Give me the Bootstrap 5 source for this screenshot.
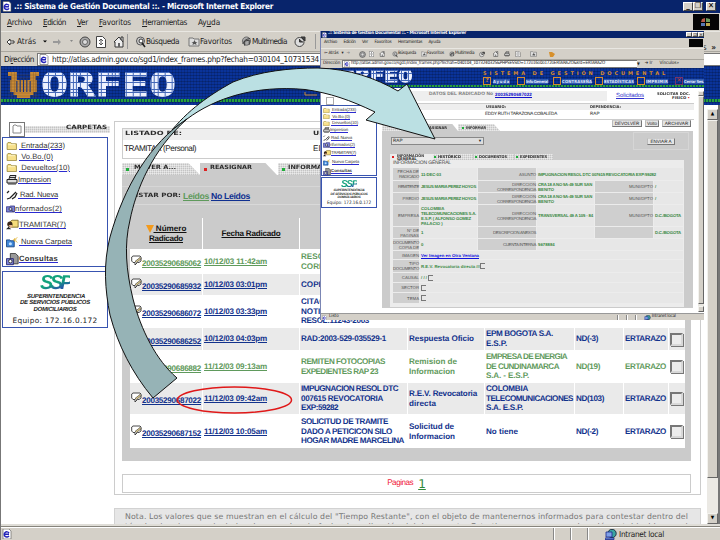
<!DOCTYPE html>
<html lang="es">
<head>
<meta charset="utf-8">
<title>Sistema de Gestión Documental</title>
<link rel="stylesheet" href="https://cdn.jsdelivr.net/npm/bootstrap@5.3.0/dist/css/bootstrap.min.css">
<style>
html,body{width:720px;height:540px;overflow:hidden}
body{font-family:"DejaVu Sans Condensed","DejaVu Sans",sans-serif;font-size:8.2px;line-height:1;color:#222;background:#fff;text-rendering:geometricPrecision}
#screen{width:720px;height:540px;border-left:1px solid #777}
span,a,b{white-space:nowrap}
a{color:#103090}
[data-w]{display:inline-block;flex:none}
svg{flex:none;display:block}
.chrome{background:#d4d0c8}
.g1{margin-left:1px}.g2{margin-left:2px}.g3{margin-left:3px}.g5{margin-left:5px}.g7{margin-left:7px}.g9{margin-left:9px}.g12{margin-left:12px}
.titlebar{height:13px;background:#08246b;color:#fff;font-weight:bold}
.winbtn{width:10px;height:9px;background:#d4d0c8;border:1px solid #fff;border-right-color:#444;border-bottom-color:#444;color:#000;font-size:8px;line-height:6px;text-align:center;flex:none}
.menus{height:18px;gap:11px;padding-left:6px}
.winlogo{width:26px;height:16px;background:#050505;margin-right:1px}
.tools{height:20px;border-top:1px solid #e9e7e2;padding-left:5px}
.addr{height:15px;border-top:1px solid #a9a69e;padding-left:3px}
.vline{width:1px;height:15px;background:#999;flex:none}
.field{height:13px;background:#fff;border:1px solid #777;border-right:0;flex:1;margin-left:3px;min-width:0}
.banner{height:39px;background:#0a3399;background-image:repeating-linear-gradient(#0003 0 1px,transparent 1px 3px),repeating-linear-gradient(90deg,#0002 0 1px,transparent 1px 3px)}
.dots{height:3px;background:repeating-linear-gradient(90deg,#28a03c 0 2px,#0b4c50 2px 3px)}
.orfeo{font:bold 33px/26px "DejaVu Sans Mono",monospace;color:transparent;transform:scaleX(1.36);transform-origin:left center;-webkit-background-clip:text;background-clip:text;-webkit-text-stroke:.8px transparent;background-image:repeating-linear-gradient(#4468b8 0 .5px,transparent .5px 3.4px),repeating-linear-gradient(90deg,#4468b8 0 .5px,transparent .5px 2.6px),linear-gradient(#eef2ff,#eef2ff)}
.sideb{width:113px;flex:none;padding:16px 0 0 1px}
.grain{background:repeating-linear-gradient(90deg,#fff6 0 1px,transparent 1px 2px),repeating-linear-gradient(#fff6 0 1px,transparent 1px 2px),#c4c4c4}
.wide{font-family:"DejaVu Sans",sans-serif;font-weight:bold;text-transform:uppercase;font-size:5.8px;color:#2c2c2c}
.sidebox{width:106px;border:1px solid #3854b0}
.tree{height:130px;padding:2px 0 0 3px;font:7.6px/1 "Liberation Sans",sans-serif}
.tree>div{display:flex;align-items:center}
.tree a{color:#333;text-decoration-color:#2b2bd0}
.h11{height:11px}.h14{height:14.5px}.h17{height:17px}
.ssp{font:italic bold 20px/18px "Liberation Sans",sans-serif;color:transparent;-webkit-background-clip:text;background-clip:text;background-image:linear-gradient(160deg,#12a27c 0 50%,#2356a8 75%,#1aa070)}
.agency{font:italic bold 6px/6.4px "Liberation Sans",sans-serif;color:#222}
.frame{width:587px;height:374px;border:1px solid #ccc;margin-top:16px;padding:6px 0 0 7px}
.whobox{width:569px;height:31px;border:1px solid #ccc}
.tabrow{height:12px;margin-top:4px}
.tabx{height:12px;flex:none;clip-path:polygon(0 0,85% 0,100% 100%,0 100%);padding-left:4px}
.sq{width:3px;height:3px;background:#1fae3a;flex:none}.sq.red{background:#d22}
.panel{width:569px;height:286px;background:#cbcbcb}
.band{height:19px;margin-top:11px;border-top:1px solid #d6d6d6;border-bottom:1px solid #d9d9d9;font:bold 8.7px/10px "Liberation Sans",sans-serif}
.docs{display:grid;grid-template-columns:72px 96px 107px 76px 89px 48px 44px 16px;grid-template-rows:31px 23px 21px 31px 22px 31px 31px 33px;gap:1px;width:555px;height:230px;margin:13px 0 0 8px;background:#fff;font:bold 8.1px/9.8px "Liberation Sans",sans-serif;color:#12328c}
.docs>div{display:flex;flex-direction:column;justify-content:center;padding-left:1px;min-width:0}
.docs>.hd{background:#cbcbcb;color:#111;align-items:center;padding:0}
.docs>.e{background:#eaeaea}
.docs>.v{color:#5f9a5c}
.docs a{color:inherit}
.docs>.num{flex-direction:row;justify-content:flex-start;align-items:center;padding:0 0 0 1px}
.num a{margin-top:5px}
.num svg{margin-top:-3px}
.chk{width:13px;height:13px;background:#ececec;border:2px solid #777;border-right-color:#d8d8d8;border-bottom-color:#d8d8d8;box-shadow:1px 1px #777}
.pages{width:569px;height:19px;border:1px solid #ccc;margin-top:13px;font-family:"Liberation Sans",sans-serif;color:#f0203c}
.pages a{font:12px/12px "DejaVu Sans",sans-serif;color:#2f8a3a}
.note{width:587px;height:17px;margin-top:13px;background:#e6e6e6;border:1px solid #d2d2d2;border-bottom:0;overflow:hidden;font:7.8px/10px "DejaVu Sans",sans-serif;color:#777;padding:3px 0 0 10px}
.sbar{width:11px;height:415px;background:#ebe9e4;margin-top:4px;flex:none}
.sbtn{height:11px;background:#d4d0c8;border:1px solid #f3f2ee;border-right-color:#666;border-bottom-color:#666;font-size:5px;color:#000}
.status{height:13px;border-top:1px solid #fff}
.pane{height:12px;width:17px;border-left:1px solid #888;box-shadow:inset 1px 0 #fff}
/* floating browser window */
#pop{position:absolute;left:319px;top:31px;width:384px;height:289px;background:#fff;border-left:1px solid #7b86b4;font-size:4.6px;overflow:hidden}
#pop .titlebar{height:7px}
#pop .menus{height:10px;gap:6.5px;padding-left:3px}
#pop .tools{height:11px;padding-left:3px}
#pop .addr{height:9px;padding-left:2px}
#pop .field{height:8px;margin-left:2px;flex:0 0 341px;border-width:.5px}
#pop .winbtn{width:6px;height:5px;font-size:4px;line-height:3px;border-width:.5px}
#pop .banner{height:20px;overflow:hidden}
#pop .orfeo{font-size:17.5px;line-height:14px}
#pop .tree{height:71px;font-size:4.4px;padding:1px 0 0 1px}
#pop .sidebox{width:56px}
#pop .wide{font-size:3.8px}
#pop .agency{font-size:3.3px;line-height:3.5px}
.or{color:#d58a2c}
.bi{width:8px;height:8px;border:1px solid #d58a2c;flex:none;font:bold 6px/6px "DejaVu Sans",sans-serif}
.bt{color:#dfe6fa;background:#2f58ad;font-weight:bold;font-size:4.2px;line-height:5px}
.pbtn{border:1px solid #777;border-top-color:#ccc;border-left-color:#bbb;background:#e4e4e4;height:7px;font:4.6px/5px "Liberation Sans",sans-serif;text-align:center;flex:none}
.pmain{width:316px;padding-left:4px;flex:none;font-family:"Liberation Sans",sans-serif}
.ppanel{width:311px;height:177px;background:#cbcbcb}
.info{width:294px;height:147px;background:#ececec;margin-left:8px;padding:1px 0 0 3px}
.grid6{display:grid;grid-template-columns:26px 57px 58px 57px 58px 29px;grid-template-rows:12px 11px 11px 21px 11px 11px 8px 12px 9px 9px 10px;gap:1px;font:4.3px/5px "Liberation Sans",sans-serif}
.grid6>div{display:flex;flex-direction:column;justify-content:center;background:#e7e7e7;color:#3c8a46;font-weight:bold;min-width:0;padding-left:1px}
.grid6>.l{background:#cfcfcf;color:#555;align-items:flex-end;font-weight:normal;padding:0}
.grid6>.s5{grid-column:span 5}.grid6>.s3{grid-column:span 3}
.grid6>.rw{flex-direction:row;justify-content:flex-start;align-items:center}
.mini{width:5px;height:6px;border:1px solid #777;border-right:0;flex:none}
#arrow{position:absolute;left:0;top:0;pointer-events:none}
</style>
</head>
<body>
<svg width="0" height="0" class="position-absolute"><defs>
<symbol id="ie" viewBox="0 0 10 10"><path d="M1 0h6l2 2v8H1z" fill="#fff" stroke="#555" stroke-width=".6"/><path d="M7 6.800A2.600 2.600 0 1 1 7 4M2 5.200h5" fill="none" stroke="#2424b8" stroke-width="1.400"/></symbol>
<symbol id="fold" viewBox="0 0 12 9"><path d="M.5 8.500V2l1-1.500h3L5.500 2h5.500v6.500z" fill="#f7e08a" stroke="#8b7a28" stroke-width=".8"/><path d="M1.500 3h8" stroke="#fff8cc"/></symbol>
<symbol id="prt" viewBox="0 0 12 10"><path d="M3 4l1-3.500h6L9 4M1 4.500h10v3.500H1z" fill="#ddd" stroke="#222"/><path d="M2 9h8M3 2.500h6" stroke="#333"/></symbol>
<symbol id="pen" viewBox="0 0 12 10"><path d="M1 3l2-2M1 9l3-1 6-6M6 9l3-2 2-4" fill="none" stroke="#222" stroke-width="1.300"/></symbol>
<symbol id="inf" viewBox="0 0 12 10"><path d="M.5 2h4l1-1h6v8H.5z" fill="#7c82d8" stroke="#29297a"/><circle cx="6" cy="5" r="2" fill="#d8dcff" stroke="#222"/><path d="M7 6l3 3" stroke="#222"/></symbol>
<symbol id="man" viewBox="0 0 15 12"><path d="M5 2l2-1.500h7v8H5z" fill="#f5dc7a" stroke="#786420"/><circle cx="4.500" cy="5" r="3" fill="#3a2618"/><path d="M3 6h4v3H5z" fill="#e8b48c"/><path d="M0 11l3-3 3 3z" fill="#222"/></symbol>
<symbol id="new" viewBox="0 0 15 12"><path d="M.5 3h4l1 1h4v7h-9z" fill="#3f86d8" stroke="#14407c"/><circle cx="5" cy="7.500" r="1.800" fill="#bfe0ff"/><path d="M10 1v4M8 3h4M13 0l-2 2M13 6l-2-2" stroke="#e0b030"/></symbol>
<symbol id="con" viewBox="0 0 15 14"><path d="M5 0h6l3 3v9H5z" fill="#999" stroke="#333"/><path d="M.5 6h8v7h-8z" fill="#7c82d8" stroke="#222266"/><circle cx="5" cy="9" r="2" fill="#fff" stroke="#222"/></symbol>
<symbol id="stop" viewBox="0 0 12 12"><circle cx="6" cy="6" r="5" fill="#aaa" stroke="#444"/><circle cx="6" cy="6" r="2.500" fill="#ddd" stroke="#666"/></symbol>
<symbol id="refr" viewBox="0 0 10 12"><path d="M.5.500h6l3 3v8h-9z" fill="#fff" stroke="#444"/><path d="M3 5l2-2 2 2M5 3v3M3 7l2 2 2-2M5 9V6" fill="none" stroke="#555"/></symbol>
<symbol id="home" viewBox="0 0 11 12"><path d="M1 6l5-5 4 5v5H2V6zM8 4V1h2v5" fill="#eee" stroke="#333"/><path d="M5 7h2v4H5z" fill="#666"/></symbol>
<symbol id="srch" viewBox="0 0 11 12"><circle cx="5.500" cy="5" r="4" fill="#ccc" stroke="#555"/><circle cx="6" cy="5" r="2" fill="#fff" stroke="#333"/><path d="M7 7l3 4" stroke="#222" stroke-width="1.500"/></symbol>
<symbol id="favo" viewBox="0 0 11 10"><path d="M.5 1h4l1 1h5v7H.5z" fill="#ddd" stroke="#777"/><path d="M6 3l1 2h2L7.500 6l.5 2-2-1-2 1 .5-2L3 5h2z" fill="#555"/></symbol>
<symbol id="mm" viewBox="0 0 12 12"><circle cx="6" cy="5" r="4.500" fill="#aaa" stroke="#666"/><path d="M2 8c2-5 5-5 8-6M4 10V5l5-1v5" fill="none" stroke="#333"/></symbol>
<symbol id="hist" viewBox="0 0 12 12"><circle cx="5.500" cy="6" r="4.500" fill="#ddd" stroke="#444"/><path d="M5.500 3v3H9M7 1h4v4z" fill="#444" stroke="#333"/></symbol>
<symbol id="note" viewBox="0 0 11 11"><path d="M2 1h7l1 1v4L8 7.500H6.500L4 10V7.500H2L.7 6V2z" fill="#fff" stroke="#333" stroke-width=".9"/><path d="M4 6.500L9 2.500l1.200 1.300L5.500 7.500z" fill="#dcc888" stroke="#333" stroke-width=".6"/></symbol>
<symbol id="net" viewBox="0 0 12 11"><circle cx="7" cy="4.500" r="4.200" fill="#39a3a0" stroke="#234"/><path d="M1 3h6v5H1zM0 9h9v1.500H0z" fill="#7fa0e8" stroke="#18288c" stroke-width=".8"/></symbol>
<symbol id="lyre" viewBox="0 0 28 26"><path d="M0 0h8v4H0zM20 0h8v4h-8zM3 4h5v4H3zM20 4h5v4h-5zM2 8h24v12H2zM5 20h18v3H5zM8 23h12v3H8z" fill="#c98a35"/><path d="M8 9v11M11 6v14M14 6v14M17 6v14M20 9v11" stroke="#123284"/><path d="M0 3h28M0 6h28M0 9h28M0 12h28M0 15h28M0 18h28M0 21h28M0 24h28M3 0v26M6 0v26M23 0v26M25 0v26" stroke="#6b4c2a" stroke-width=".5" opacity=".6"/></symbol>
</defs></svg>

<div id="screen" class="position-relative d-flex flex-column overflow-hidden">
  <div class="titlebar d-flex align-items-center">
    <svg class="g1" width="10" height="11"><use href="#ie"/></svg><span class="g2" data-w="259">.:: Sistema de Gestión Documental ::. - Microsoft Internet Explorer</span>
    <div class="ms-auto d-flex"><div class="winbtn">_</div><div class="winbtn">❐</div><div class="winbtn g3 me-1">✕</div></div>
  </div>
  <div class="chrome menus d-flex align-items-center">
    <span data-w="25"><u>A</u>rchivo</span><span data-w="23"><u>E</u>dición</span><span data-w="11"><u>V</u>er</span><span data-w="32"><u>F</u>avoritos</span><span data-w="45"><u>H</u>erramientas</span><span data-w="22">Ay<u>u</u>da</span>
    <div class="winlogo ms-auto d-flex align-items-center justify-content-center"><svg width="12" height="10"><path d="M2 2l3-1v4H1z" fill="#b65a48"/><path d="M6 1l4 1v3H6z" fill="#6d9b5c"/><path d="M1 6h4v3H1z" fill="#5878b4"/><path d="M6 6h4v3H6z" fill="#bca64c"/></svg></div>
  </div>
  <div class="chrome tools d-flex align-items-center">
    <svg width="9" height="8"><path d="M4 1L1 4l3 3V5h4V3H4z" fill="#fff" stroke="#222" stroke-width=".9"/></svg><span class="g2" data-w="19">Atrás</span>
    <svg class="g7" width="5" height="4"><path d="M0 .5h4l-2 2z"/></svg>
    <svg class="g5" width="10" height="8"><path d="M5 1l3 3-3 3V5H0V3h5z" fill="#999"/></svg>
    <svg class="g7" width="4" height="3"><path d="M0 0h3l-1.500 2z" fill="#888"/></svg>
    <svg class="g5" width="12" height="12"><use href="#stop"/></svg>
    <svg class="g5" width="10" height="12"><use href="#refr"/></svg>
    <svg class="g7" width="11" height="12"><use href="#home"/></svg>
    <div class="vline g3"></div>
    <svg class="g7" width="11" height="12"><use href="#srch"/></svg><span data-w="33">Búsqueda</span>
    <svg class="g9" width="12" height="10"><use href="#favo"/></svg><span data-w="32">Favoritos</span>
    <svg class="g9" width="11" height="12"><use href="#mm"/></svg><span data-w="35">Multimedia</span>
    <svg class="g7" width="12" height="12"><use href="#hist"/></svg><div class="vline g9"></div>
    <span class="ms-auto me-1 align-self-end">s &nbsp;<b>»</b></span>
  </div>
  <div class="chrome addr d-flex align-items-center">
    <span data-w="30">Di<u>r</u>ección</span>
    <div class="field d-flex align-items-center"><svg class="g1" width="10" height="11"><use href="#ie"/></svg><span class="g3" data-w="267">http://atlas.admin.gov.co/sgd1/index_frames.php?fechah=030104_10731534</span></div>
  </div>
  <div class="banner d-flex flex-column">
    <div class="d-flex align-items-center pt-1" style="height:33px"><svg class="g7" width="31" height="26" viewBox="0 0 28 26" preserveAspectRatio="none"><use href="#lyre" width="28" height="26"/></svg><span class="orfeo g2">ORFEO</span></div>
    <div class="dots"></div>
  </div>

  <div class="d-flex overflow-hidden" style="height:419px">
    <div class="sideb">
      <div class="d-flex align-items-center g7" style="height:16px">
        <svg width="16" height="15"><rect x=".5" y=".5" width="15" height="14" fill="#fff" stroke="#777"/><path d="M4 11V4l1-1h2l1 1h4v7z" fill="#fff" stroke="#888"/></svg>
        <div class="grain flex-grow-1 d-flex justify-content-end align-items-center me-1" style="height:7px;padding-right:3px"><span class="wide" data-w="41">Carpetas</span></div>
      </div>
      <div class="sidebox tree">
        <div class="h11"><svg width="12" height="8"><use href="#fold"/></svg><a href="#" class="g1" data-w="46">&nbsp;Entrada(233)</a></div>
        <div class="h11"><svg width="12" height="8"><use href="#fold"/></svg><a href="#" class="g1" data-w="34">&nbsp;Vo.Bo.(0)</a></div>
        <div class="h11"><svg width="12" height="8"><use href="#fold"/></svg><a href="#" class="g1" data-w="51">&nbsp;Devueltos(10)</a></div>
        <div class="h14"><svg width="12" height="10"><use href="#prt"/></svg><a href="#" data-w="33">Impresion</a></div>
        <div class="h14"><svg width="12" height="10"><use href="#pen"/></svg><a href="#" data-w="40">&nbsp;Rad. Nueva</a></div>
        <div class="h14"><svg width="9" height="10"><use href="#inf"/></svg><a href="#" data-w="47">nformados(2)</a></div>
        <div class="h17"><svg width="13" height="12"><use href="#man"/></svg><a href="#" data-w="47">TRAMITAR(7)</a></div>
        <div class="h17"><svg width="13" height="11"><use href="#new"/></svg><a href="#" data-w="53">&nbsp;Nueva Carpeta</a></div>
        <div class="h17"><svg width="13" height="13"><use href="#con"/></svg><a href="#" data-w="39"><b>Consultas</b></a></div>
      </div>
      <div class="sidebox d-flex flex-column align-items-center" style="height:57px;margin-top:4px;padding-top:2px">
        <span class="ssp" data-w="30">SSP</span>
        <span class="agency g2" style="margin-top:2px" data-w="58">SUPERINTENDENCIA</span><span class="agency" data-w="70">DE SERVICIOS PÚBLICOS</span><span class="agency" data-w="43">DOMICILIARIOS</span>
        <span style="font:7.4px/10px 'DejaVu Sans';margin-top:3px" data-w="85">Equipo: 172.16.0.172</span>
      </div>
    </div>

    <div style="width:593px" class="flex-shrink-0">
      <div class="frame">
        <div class="whobox">
          <div class="d-flex align-items-center" style="height:11px;background:#eee"><span class="wide g2" style="width:188px"><span data-w="57">Listado de:</span></span><span class="wide" data-w="42">Usuario:</span></div>
          <div class="d-flex align-items-center" style="height:18px;font-family:'Liberation Sans'"><span class="g1" style="width:189px"><span data-w="72">TRAMITAR (Personal)</span></span><span>EDDY</span></div>
        </div>
        <div class="tabrow d-flex">
          <div class="tabx grain d-flex align-items-center" style="width:78px"><i class="sq"></i><b class="wide g5" data-w="42">Mover a...</b></div>
          <div class="tabx d-flex align-items-center" style="width:77px;background:#cbcbcb"><i class="sq red"></i><b class="wide g3" data-w="42">Reasignar</b></div>
          <div class="tabx grain d-flex align-items-center g1" style="width:80px"><i class="sq"></i><b class="wide g3" data-w="39">Informar</b></div>
        </div>
        <div class="panel overflow-hidden">
          <div class="band d-flex align-items-center"><span class="wide g9" data-w="50">Listar por:</span><a class="g2" href="#" style="color:#5f9a5c" data-w="26">Leídos</a><a class="g2" href="#" data-w="39">No Leídos</a></div>
          <div class="docs">
            <div class="hd"><span class="d-flex align-items-center"><svg width="8" height="8"><path d="M0 0h8L4 8z" fill="#f39a1c"/></svg><u data-w="33">&nbsp;Número</u></span><u data-w="34">Radicado</u></div><div class="hd"><u data-w="59">Fecha Radicado</u></div><div class="hd"></div><div class="hd"></div><div class="hd"></div><div class="hd"></div><div class="hd"></div><div class="hd"></div>

            <div class="num v"><svg width="11" height="11"><use href="#note"/></svg><a href="#" data-w="59">20035290685062</a></div><div class="v"><a href="#" data-w="63">10/12/03 11:42am</a></div><div class="v"><span>RESOL</span><span>CORRE</span></div><div></div><div></div><div></div><div></div><div></div>

            <div class="num e"><svg width="11" height="11"><use href="#note"/></svg><a href="#" data-w="59">20035290685932</a></div><div class="e"><a href="#" data-w="63">10/12/03 03:01pm</a></div><div class="e">COPIA</div><div class="e"></div><div class="e"></div><div class="e"></div><div class="e"></div><div class="e"></div>

            <div class="num"><svg width="11" height="11"><use href="#note"/></svg><a href="#" data-w="59">20035290686072</a></div><div><a href="#" data-w="63">10/12/03 03:33pm</a></div><div><span>CITAC</span><span>NOTIF</span><span data-w="68">RESOL:11243-2003</span></div><div></div><div></div><div></div><div></div><div></div>

            <div class="num e"><svg width="11" height="11"><use href="#note"/></svg><a href="#" data-w="59">20035290686252</a></div><div class="e"><a href="#" data-w="63">10/12/03 04:03pm</a></div><div class="e"><span data-w="85">RAD:2003-529-035529-1</span></div><div class="e"><span data-w="65">Respuesta Oficio</span></div><div class="e"><span data-w="67">EPM BOGOTA S.A.</span><span data-w="21">E.S.P.</span></div><div class="e"><span data-w="22">ND(-3)</span></div><div class="e"><span data-w="41">ERTARAZO</span></div><div class="e"><i class="chk"></i></div>

            <div class="num v"><svg width="11" height="11"><use href="#note"/></svg><a href="#" data-w="59">20035290686882</a></div><div class="v"><a href="#" data-w="63">11/12/03 09:13am</a></div><div class="v"><span data-w="84">REMITEN FOTOCOPIAS</span><span data-w="77">EXPEDIENTES RAP 23</span></div><div class="v"><span data-w="48">Remision de</span><span data-w="46">Informacion</span></div><div class="v"><span data-w="81">EMPRESA DE ENERGIA</span><span data-w="73">DE CUNDINAMARCA</span><span data-w="43">S.A. - E.S.P.</span></div><div class="v"><span data-w="24">ND(19)</span></div><div class="v"><span data-w="41">ERTARAZO</span></div><div><i class="chk"></i></div>

            <div class="num e"><svg width="11" height="11"><use href="#note"/></svg><a href="#" data-w="59">20035290687022</a></div><div class="e"><a href="#" data-w="63">11/12/03 09:42am</a></div><div class="e"><span data-w="97">IMPUGNACION RESOL DTC</span><span data-w="82">007615 REVOCATORIA</span><span data-w="37">EXP:59282</span></div><div class="e"><span data-w="68">R.E.V. Revocatoria</span><span data-w="27">directa</span></div><div class="e"><span data-w="42">COLOMBIA</span><span data-w="87">TELECOMUNICACIONES</span><span data-w="37">S.A. E.S.P.</span></div><div class="e"><span data-w="28">ND(103)</span></div><div class="e"><span data-w="41">ERTARAZO</span></div><div class="e"><i class="chk"></i></div>

            <div class="num"><svg width="11" height="11"><use href="#note"/></svg><a href="#" data-w="59">20035290687152</a></div><div><a href="#" data-w="63">11/12/03 10:05am</a></div><div><span data-w="87">SOLICITUD DE TRAMITE</span><span data-w="91">DADO A PETICICON SILO</span><span data-w="103">HOGAR MADRE MARCELINA</span></div><div><span data-w="45">Solicitud de</span><span data-w="46">Informacion</span></div><div><span data-w="32">No tiene</span></div><div><span data-w="22">ND(-2)</span></div><div><span data-w="41">ERTARAZO</span></div><div><i class="chk"></i></div>
          </div>
        </div>
        <div class="pages d-flex align-items-center justify-content-center"><span data-w="26">Paginas</span><a class="g5" href="#">1</a></div>
      </div>
      <div class="note"><span data-w="563">Nota. Los valores que se muestran en el cálculo del "Tiempo Restante", con el objeto de mantenernos informados para contestar dentro del</span><br><span data-w="563">término legal, son calculados de acuerdo a la fecha de radicación del documento. Este tiempo es una aproximación establecida por el</span></div>
    </div>
    <div class="sbar d-flex flex-column">
      <div class="sbtn d-flex align-items-center justify-content-center">▲</div><div class="sbtn" style="height:358px"></div>
      <div class="sbtn mt-auto d-flex align-items-center justify-content-center">▼</div>
    </div>
    <div style="width:2px;background:#777"></div>
  </div>
  <div style="height:3px;background:#dfddd7;border-bottom:1px solid #86847c"></div>
  <div class="chrome status d-flex align-items-center">
    <svg class="g1" width="10" height="10"><use href="#ie"/></svg>
    <div class="d-flex align-items-center" style="margin-left:541px"><div class="pane"></div><div class="pane"></div><div class="pane"></div><svg class="g1" width="12" height="11"><use href="#net"/></svg><span class="g2" data-w="45">Intranet local</span></div>
  </div>

  <div id="pop">
    <div class="titlebar d-flex align-items-center"><svg class="g1" width="5" height="6"><use href="#ie"/></svg><span class="g1" data-w="138">.:: Sistema de Gestión Documental ::. - Microsoft Internet Explorer</span><div class="ms-auto d-flex"><div class="winbtn">_</div><div class="winbtn">❐</div><div class="winbtn">✕</div></div></div>
    <div class="chrome menus d-flex align-items-center"><span data-w="13">Archivo</span><span data-w="12">Edición</span><span data-w="6">Ver</span><span data-w="17">Favoritos</span><span data-w="24">Herramientas</span><span data-w="12">Ayuda</span><div class="winlogo ms-auto" style="width:14px;height:8px"></div></div>
    <div class="chrome tools d-flex align-items-center"><span>⇦</span><span class="g1" data-w="10">Atrás</span><span class="g3">▾</span><span class="g3" style="color:#888">➔</span>
      <svg class="g9" width="7" height="7"><use href="#stop"/></svg><svg class="g3" width="5" height="6"><use href="#refr"/></svg><svg class="g5" width="6" height="6"><use href="#home"/></svg>
      <svg class="g7" width="6" height="7"><use href="#srch"/></svg><span data-w="18">Búsqueda</span><svg class="g5" width="6" height="6"><use href="#favo"/></svg><span data-w="17">Favoritos</span><svg class="g5" width="6" height="7"><use href="#mm"/></svg><span data-w="19">Multimedia</span><svg class="g5" width="6" height="7"><use href="#hist"/></svg>
      <svg class="g7" width="7" height="6"><use href="#home"/></svg><svg class="g5" width="6" height="6"><use href="#prt"/></svg><svg class="g5" width="6" height="6"><use href="#refr"/></svg><svg class="g9" width="7" height="6"><use href="#favo"/></svg><svg class="g12" width="7" height="6"><path d="M0 1h3l3 2-2 3H1z" fill="#d7902c"/></svg></div>
    <div class="chrome addr d-flex align-items-center"><span data-w="17">Dirección</span>
      <div class="field d-flex align-items-center"><svg class="g1" width="6" height="6"><use href="#ie"/></svg><span class="g1" data-w="254">http://atlas.admin.gov.co/sgd1/index_frames.php?fechah=040104_1073240325&amp;PHPSESSID=172o16o0o172oERTARAZO&amp;krd=ERTARAZO</span>
        <div class="chrome d-flex align-items-center ms-auto" style="width:46px;height:8px;padding-left:0"><span style="font-size:4px">▼</span><span class="g5">➔ Ir</span><span class="g7" data-w="17">Vínculos</span><span>»</span></div></div></div>
    <div class="banner d-flex flex-column">
      <div class="d-flex" style="height:17px;padding-top:2px">
        <svg class="g5" width="15" height="14" viewBox="0 0 28 26"><use href="#lyre" width="28" height="26"/></svg><div style="width:142px"><span class="orfeo" style="display:inline-block">ORFEO</span></div>
        <div style="padding-top:1px"><span class="or d-block" style="font:bold 5px/6px 'DejaVu Sans'"><span data-w="185">SISTEMA DE GESTIÓN DOCUMENTAL</span></span>
          <div class="d-flex align-items-center"><i class="bi or text-center">?</i><span class="bt g2" data-w="17">Ayuda</span><i class="bi g7"></i><span class="bt g1" data-w="22">Info General</span><i class="bi g5"></i><span class="bt g1" data-w="30">CONTRASEÑA</span><i class="bi g3"></i><span class="bt g1" data-w="30">ESTADÍSTICAS</span><i class="bi g3"></i><span class="bt g1" data-w="22">IMPRIMIR</span><i class="bi g7 text-center" style="border-color:#736;color:#b44">✕</i><span class="bt g1" data-w="20">Cerrar Ses.</span></div>
        </div>
      </div>
      <div class="dots" style="height:2px"></div>
    </div>
    <div class="d-flex" style="height:225px">
      <div style="width:57px;padding-top:9px" class="flex-shrink-0">
        <svg class="g5 d-block" width="8" height="8"><rect x=".5" y=".5" width="7" height="7" fill="#fff" stroke="#aaa"/></svg>
        <div class="sidebox tree">
          <div style="height:6.500px"><svg width="7" height="5"><use href="#fold"/></svg><a href="#" class="g1" data-w="25">&nbsp;Entrada(233)</a></div>
          <div style="height:6.500px"><svg width="7" height="5"><use href="#fold"/></svg><a href="#" class="g1" data-w="19">&nbsp;Vo.Bo.(0)</a></div>
          <div style="height:6.500px"><svg width="7" height="5"><use href="#fold"/></svg><a href="#" class="g1" data-w="27">&nbsp;Devueltos(10)</a></div>
          <div style="height:7.500px"><svg width="7" height="6"><use href="#prt"/></svg><a href="#" data-w="18">Impresion</a></div>
          <div style="height:7.500px"><svg width="7" height="6"><use href="#pen"/></svg><a href="#" class="g1" data-w="21">Rad. Nueva</a></div>
          <div style="height:7.500px"><svg width="7" height="6"><use href="#inf"/></svg><a href="#" data-w="25">nformados(2)</a></div>
          <div style="height:9px"><svg width="8" height="7"><use href="#man"/></svg><a href="#" data-w="25">TRAMITAR(7)</a></div>
          <div style="height:9px"><svg width="8" height="7"><use href="#new"/></svg><a href="#" class="g1" data-w="27">Nueva Carpeta</a></div>
          <div style="height:9px"><svg width="8" height="8"><use href="#con"/></svg><a href="#" data-w="21"><b>Consultas</b></a></div>
        </div>
        <div class="sidebox d-flex flex-column align-items-center" style="height:31px;margin-top:1px;padding-top:2px"><span class="ssp" style="font-size:10px;line-height:9px" data-w="16">SSP</span><span class="agency" data-w="31">SUPERINTENDENCIA</span><span class="agency" data-w="37">DE SERVICIOS PÚBLICOS</span><span class="agency" data-w="23">DOMICILIARIOS</span><span style="margin-top:2px" data-w="44">Equipo: 172.16.0.172</span></div>
      </div>
      <div class="pmain">
        <div class="d-flex align-items-center" style="height:15px"><div class="d-flex align-items-center" style="width:225px;height:10px;background:#eee;padding-left:47px"><b style="font-size:4.800px;color:#777" data-w="64">DATOS DEL RADICADO No</b><a href="#" style="color:#11c;font-weight:bold" class="g2" data-w="37">20035290687022</a></div><a href="#" class="g9" style="font-size:6px;color:#33c" data-w="28">Solicitados</a><b class="wide text-end ms-auto me-1" style="line-height:4px"><span data-w="33">Solicitar Doc.</span><br>Fisico <span style="color:#d22">•</span></b></div>
        <div class="d-flex align-items-center" style="height:7px;background:#eee;border-top:1px solid #ccc"><b class="wide" style="margin-left:104px" data-w="20">Usuario:</b><b class="wide" style="margin-left:84px" data-w="31">Dependencia:</b></div>
        <div class="d-flex align-items-center" style="height:10px;border-bottom:1px solid #ccc"><span style="margin-left:103px" data-w="72">EDDY RUTH TARAZONA COBALEDA</span><span style="margin-left:33px">RAP</span></div>
        <div class="d-flex justify-content-end" style="height:7px;margin-right:3px;gap:3px"><div class="pbtn" style="width:30px">DEVOLVER</div><div class="pbtn" style="width:14px">Volto</div><div class="pbtn" style="width:29px">ARCHIVAR</div></div>
        <div class="d-flex" style="height:7px;margin-top:-3px"><div class="tabx grain" style="width:38px;height:7px"></div><div class="tabx d-flex align-items-center" style="width:38px;height:7px;background:#cbcbcb"><b class="wide" data-w="23">Reasignar</b></div><div class="tabx grain d-flex align-items-center" style="width:42px;height:7px"><i class="sq" style="width:2px;height:2px"></i><b class="wide g2" data-w="20">Informar</b></div></div>
        <div class="ppanel overflow-hidden">
          <div class="d-flex align-items-center" style="height:20px"><div class="d-flex align-items-center justify-content-between" style="margin-left:9px;width:93px;height:8px;background:#ddd;border:1px solid #888;padding:0 1px">RAP<span style="font-size:4px">▼</span></div><div class="d-flex align-items-center justify-content-center" style="margin-left:149px;width:56px;height:18px;border:1px solid #d6d6d6"><div class="pbtn" style="width:28px">ENVIAR A</div></div></div>
          <div class="d-flex align-items-center wide" style="height:9px;margin-left:8px;padding-top:3px"><div class="d-flex align-items-center" style="width:43px;height:6px;background:#ececec;padding-left:2px"><i class="sq red" style="width:2px;height:2px"></i><span class="g3" style="line-height:3px"><span data-w="27">Información</span><br>General</span></div><div class="d-flex align-items-center grain" style="width:40px;height:6px"><i class="sq g1" style="width:2px;height:2px"></i><span class="g2" data-w="23">Histórico</span></div><div class="d-flex align-items-center grain g1" style="width:40px;height:6px"><i class="sq g1" style="width:2px;height:2px"></i><span class="g2" data-w="28">Documentos</span></div><div class="d-flex align-items-center grain g1" style="width:38px;height:6px"><i class="sq g1" style="width:2px;height:2px"></i><span class="g2" data-w="27">Expedientes</span></div></div>
          <div class="info">
            <div style="height:7px;font-size:5px;color:#444"><span data-w="58">INFORMACION GENERAL</span></div>
            <div class="grid6">
              <div class="l"><span>FECHA DE</span><span data-w="20">RADICADO</span></div><div><span data-w="20">11-DEC-03</span></div><div class="l"><span data-w="17">ASUNTO</span></div><div class="s3"><span data-w="118">IMPUGNACION RESOL DTC 007615 REVOCATORIA EXP:59282</span></div>
              <div class="l"><span data-w="21">REMITENTE</span></div><div><span data-w="55">JESUS MARIA PEREZ HOYOS</span></div><div class="l"><span>DIRECCION</span><span data-w="39">CORRESPONDENCIA</span></div><div><span data-w="54">CRA 18 A NO 5A-49 SUR SAN</span><span>BENITO</span></div><div class="l"><span>MUNI/DPTO</span></div><div>/</div>
              <div class="l"><span>PREDIO</span></div><div><span data-w="55">JESUS MARIA PEREZ HOYOS</span></div><div class="l"><span>DIRECCION</span><span data-w="39">CORRESPONDENCIA</span></div><div><span data-w="54">CRA 18 A NO 5A-49 SUR SAN</span><span>BENITO</span></div><div class="l"><span>MUNI/DPTO</span></div><div>/</div>
              <div class="l"><span>EMPRESA</span></div><div><span>COLOMBIA</span><span data-w="55">TELECOMUNICACIONES S.A.</span><span data-w="50">E.S.P. ( ALFONSO GOMEZ</span><span>PALACIO )</span></div><div class="l"><span>DIRECCION</span><span data-w="39">CORRESPONDENCIA</span></div><div><span data-w="55">TRANSVERSAL 49 A 105 - 84</span></div><div class="l"><span>MUNI/DPTO</span></div><div><span data-w="26">D.C./BOGOTA</span></div>
              <div class="l"><span>N° DE</span><span>PAGINAS</span></div><div>1</div><div class="l"><span data-w="43">DESCRIPCION ANEXOS</span></div><div></div><div class="l"></div><div><span data-w="26">D.C./BOGOTA</span></div>
              <div class="l"><span data-w="26">DOCUMENTO</span><span>COPIA DE</span></div><div>0</div><div class="l"><span data-w="33">CUENTA INTERNA</span></div><div class="s3">5678884</div>
              <div class="l">IMAGEN</div><div class="s5"><a href="#" style="color:#11d" data-w="58">Ver Imagen en Otra Ventana</a></div>
              <div class="l"><span>TIPO</span><span data-w="26">DOCUMENTO</span></div><div class="s5 rw"><span data-w="59">R.E.V. Revocatoria directa ///</span><i class="mini"></i></div>
              <div class="l">CAUSAL</div><div class="s5 rw">/ / /<i class="mini g1"></i></div>
              <div class="l">SECTOR</div><div class="s5 rw"><i class="mini"></i></div>
              <div class="l">TEMA</div><div class="s5 rw"><i class="mini"></i></div>
            </div>
          </div>
        </div>
      </div>
      <div class="d-flex flex-column ms-auto" style="width:6px;margin-top:3px;height:221px;background:#e8e6e0"><div class="sbtn" style="height:5px"></div><div class="sbtn" style="height:208px"></div><div class="sbtn mt-auto" style="height:6px"></div></div>
    </div>
    <div class="chrome d-flex align-items-center" style="height:8px;border-top:1px solid #999"><svg class="g1" width="5" height="6"><use href="#ie"/></svg><span class="g2">Listo</span><div class="d-flex align-items-center" style="margin-left:278px"><div class="pane" style="width:9px;height:6px"></div><div class="pane" style="width:9px;height:6px"></div><div class="pane" style="width:9px;height:6px"></div><svg width="7" height="6"><use href="#net"/></svg><span class="g1" data-w="24">Intranet local</span></div></div>
  </div>

  <svg id="arrow" width="719" height="540" viewBox="1 0 719 540" stroke-linejoin="round">
    <path d="M305 92v3h12" fill="none" stroke="#c98a35"/>
    <path d="M172 130C192 106 215 92 233 82C260 71 290 68 318 68C350 69 375 78 398 91L407 84L435 139L366 120L375 112C350 100 330 93 305 89.500C255 85 215 98 187 119Z" fill="#bbe0e3" stroke="#111"/>
    <path d="M187 119C150 143 124 187 110 237C103 264 105 290 110 315C118 345 132 373 153 398L177 378C156 360 141 330 133 299C126 270 124 245 130 220C136 190 152 150 187 119Z" fill="#96b3b6" stroke="#111"/>
    <ellipse cx="234.500" cy="400" rx="57" ry="13" fill="none" stroke="#e01818" stroke-width="1.500"/>
  </svg>
</div>
<script src="https://cdn.jsdelivr.net/npm/bootstrap@5.3.0/dist/js/bootstrap.bundle.min.js"></script>
<script>
// Fit each label to its column width: headings are stretched, other text is tracked.
document.querySelectorAll('[data-w]').forEach(function (el) {
  var w = +el.dataset.w, r = document.createRange();
  r.selectNodeContents(el);
  var n = r.getBoundingClientRect().width;
  if (el.closest('.wide')) {
    el.style.transformOrigin = 'left center';
    el.style.transform = 'scaleX(' + w / n + ')';
    el.style.marginRight = (w - n) + 'px';
  } else {
    el.style.letterSpacing = (w - n) / el.textContent.length + 'px';
    el.style.width = w + 'px';
  }
});
</script>
</body>
</html>
